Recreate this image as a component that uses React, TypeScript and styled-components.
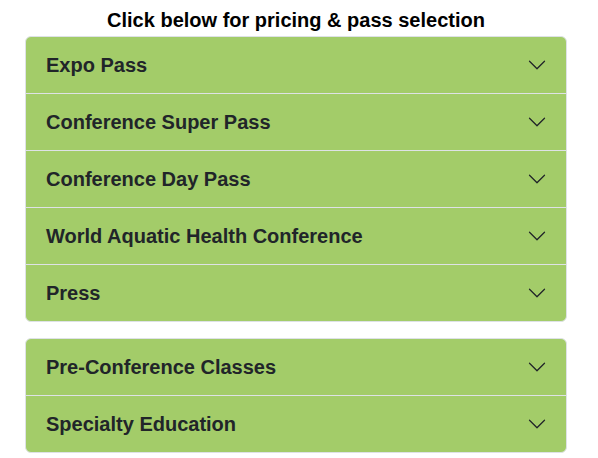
import styled, { createGlobalStyle } from 'styled-components';

const GlobalStyle = createGlobalStyle`
  html, body {
    margin: 0;
    padding: 0;
    background: #ffffff;
  }
  body {
    font-family: "Liberation Sans", Arial, sans-serif;
  }
`;

const groups: string[][] = [
  ['Expo Pass', 'Conference Super Pass', 'Conference Day Pass', 'World Aquatic Health Conference', 'Press'],
  ['Pre-Conference Classes', 'Specialty Education'],
];

const Chevron = () => (
  <svg width="20" height="20" viewBox="0 0 16 16" fill="#212529">
    <path
      fillRule="evenodd"
      d="M1.646 4.646a.5.5 0 0 1 .708 0L8 10.293l5.646-5.647a.5.5 0 0 1 .708.708l-6 6a.5.5 0 0 1-.708 0l-6-6a.5.5 0 0 1 0-.708z"
    />
  </svg>
);

const App = () => {
  return (
    <Page>
      <GlobalStyle />
      <Title>Click below for pricing &amp; pass selection</Title>
      {groups.map((items, gi) => (
        <Accordion key={gi}>
          {items.map((label) => (
            <Item key={label}>
              <Label>{label}</Label>
              <Chevron />
            </Item>
          ))}
        </Accordion>
      ))}
    </Page>
  );
};

export default App;

const Page = styled.div`
  width: 542px;
  margin-left: 25px;
  display: flex;
  flex-direction: column;
  gap: 16px;
`;

const Title = styled.h2`
  margin: 9px 0 -11px;
  font-size: 20px;
  font-weight: bold;
  line-height: 22px;
  text-align: center;
  color: #000;
`;

const Accordion = styled.div`
  border: 1px solid #dee2e6;
  border-radius: 6px;
  overflow: hidden;
  background-color: #a3cc69;
`;

const Item = styled.div`
  display: flex;
  align-items: center;
  justify-content: space-between;
  height: 56px;
  padding: 0 19px 0 20px;
  border-top: 1px solid #dee2e6;

  &:first-of-type {
    border-top: none;
  }
`;

const Label = styled.span`
  font-size: 20px;
  font-weight: bold;
  color: #212529;
`;
